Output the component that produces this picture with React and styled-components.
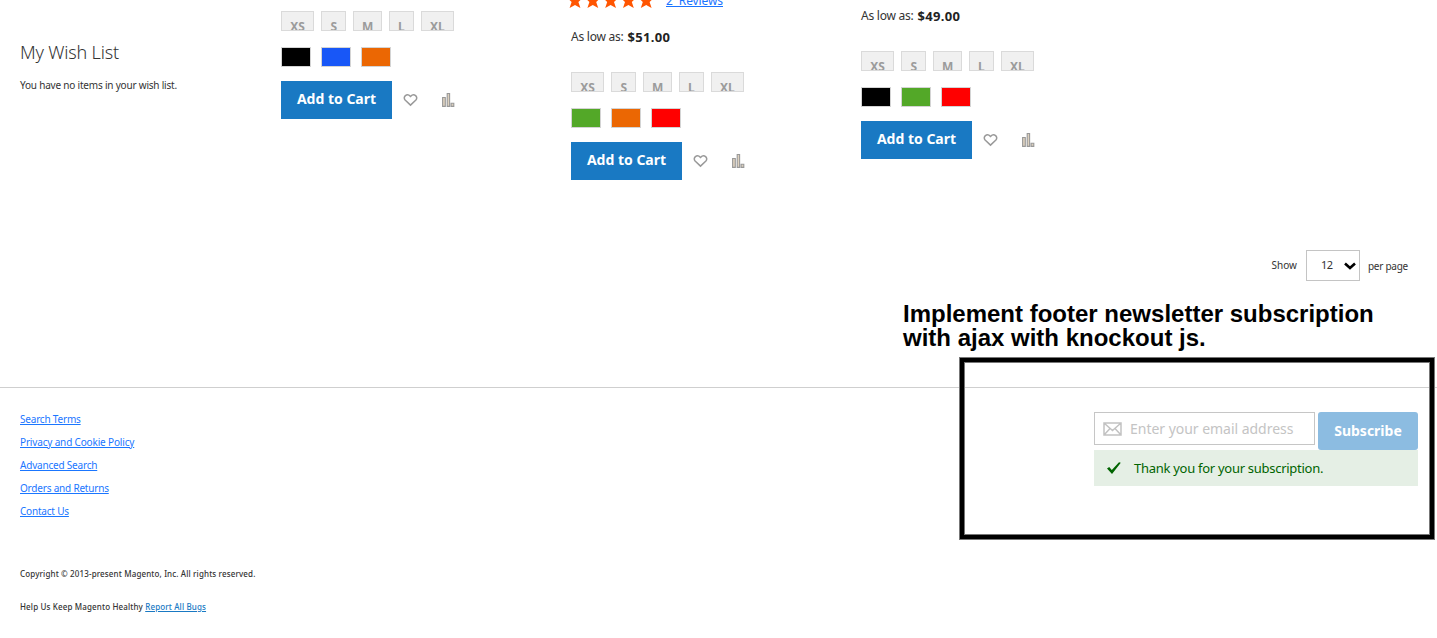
import React from "react";
import styled, { createGlobalStyle } from "styled-components";

const Global = createGlobalStyle`
  * { box-sizing: border-box; }
  body { margin: 0; background: #fff; overflow: hidden; }
`;

const Page = styled.div`
  position: relative;
  width: 1437px;
  height: 638px;
  overflow: hidden;
  color: #333;
  font-family: "Noto Sans", "Open Sans", sans-serif;
`;

const Main = styled.main`
  display: flex;
  height: 250px;
  padding-left: 20px;
`;

const Sidebar = styled.aside`
  width: 261px;
  padding-top: 40px;
`;

const Label = styled.span`
  display: inline-block;
  white-space: pre;
  font-size: ${(p) => p.$size}px;
  line-height: 16px;
  letter-spacing: ${(p) => p.$track || 0}px;
  padding-bottom: ${(p) => p.$lift || 0}px;
`;

const SideTitle = styled.h2`
  margin: 0 0 13px;
  font-weight: 300;
  font-size: 18px;
  line-height: 25px;
  letter-spacing: -0.18px;
`;

const SideText = styled.p`
  margin: 0;
  font-size: 10px;
  line-height: 14px;
  letter-spacing: -0.2px;
`;

const Card = styled.article`
  width: 290px;
  padding-top: ${(p) => p.$top}px;
`;

const Rating = styled.div`
  display: flex;
  height: 18px;
  margin: -9px 0 19px -4px;
`;

const Stars = styled.svg`
  width: 90px;
  height: 18px;
  margin-right: 9px;
  fill: #ff5501;
`;

const Reviews = styled.a`
  color: #1a73ff;
  font-size: 12px;
  line-height: 19px;
  letter-spacing: -0.1px;
  text-decoration: underline;
  white-space: pre;
`;

const Price = styled.div`
  display: flex;
  align-items: center;
  gap: 4px;
  height: 18px;
  margin-bottom: 26px;
  b { color: #222; font-size: 13px; font-weight: 700; letter-spacing: 0.35px; }
`;

const Row = styled.div`
  display: flex;
  gap: ${(p) => p.$gap}px;
  margin-bottom: ${(p) => p.$after || 0}px;
`;

const Size = styled.div`
  width: ${(p) => p.$w}px;
  height: 20px;
  overflow: hidden;
  border: 1px solid #dadada;
  background: #f0f0f0;
  color: #9b9b9b;
  padding-top: 7px;
  text-align: center;
  font-size: 12px;
  font-weight: 700;
  line-height: 16px;
`;

const Color = styled.div`
  width: 30px;
  height: 20px;
  border: 1px solid #d4d4d4;
  background: ${(p) => p.$c};
`;

const Actions = styled.div`
  display: flex;
  align-items: center;
`;

const CartButton = styled.button`
  width: 111px;
  height: 38px;
  padding: 0 0 2px;
  border: 1px solid #1979c3;
  background: #1979c3;
  color: #fff;
  font: 700 14px/18px "Noto Sans", sans-serif;
  white-space: nowrap;
`;

const Heart = styled.svg`
  width: 15px;
  height: 14px;
  margin-left: 11px;
`;

const Bars = styled.svg`
  width: 14px;
  height: 16px;
  margin-left: 24px;
`;

const Pager = styled.div`
  display: flex;
  align-items: center;
  justify-content: flex-end;
  height: 31px;
  padding-right: 29px;
`;

const Select = styled.div`
  display: flex;
  align-items: center;
  justify-content: space-between;
  width: 54px;
  height: 31px;
  margin: 0 8px 0 9px;
  padding: 0 3px 0 14px;
  border: 1px solid #c4c4c4;
`;

const Footer = styled.footer`
  display: flex;
  justify-content: space-between;
  height: 168px;
  margin-top: 106px;
  padding: 24px 19px 0 20px;
  border-top: 1px solid #cfcfcf;
`;

const Links = styled.nav`
  display: flex;
  flex-direction: column;
  align-items: flex-start;
`;

const FooterLink = styled.a`
  height: 23px;
  color: #1a76ff;
  font-size: 10px;
  line-height: 14px;
  letter-spacing: ${(p) => p.$track || -0.2}px;
  text-decoration: underline;
`;

const Newsletter = styled.section`
  width: 324px;
`;

const Field = styled.div`
  display: flex;
  align-items: center;
  width: 221px;
  height: 33px;
  padding-left: 8px;
  gap: 8px;
  border: 1px solid #c6c6c6;
  color: #c4c4c4;
`;

const Subscribe = styled.button`
  width: 100px;
  height: 38px;
  padding: 0;
  border: 0;
  border-radius: 3px;
  background: #8cbce1;
  color: #fff;
  font: 700 14px/18px "Noto Sans", sans-serif;
`;

const Success = styled.div`
  display: flex;
  align-items: center;
  height: 36px;
  padding-left: 13px;
  gap: 13px;
  background: #e5efe5;
  color: #006400;
`;

const Legal = styled.div`
  padding: 13px 20px 0;
  font-size: 8px;
  font-weight: 500;
  line-height: 12px;
  letter-spacing: ${(p) => p.$track}px;
  p { margin: 0 0 21px; }
  a { color: #1979c3; text-decoration: underline; }
`;

const Note = styled.div`
  position: absolute;
  left: 903px;
  top: 302px;
  color: #000;
  font: 700 24px/24px "Liberation Sans", Arial, sans-serif;
  white-space: nowrap;
`;

const Highlight = styled.div`
  position: absolute;
  left: 959px;
  top: 357px;
  width: 476px;
  height: 183px;
  border: 1px solid #777;
  box-shadow: inset 0 0 0 4px #000, inset 0 0 0 5px #777;
`;

const sizes = [["XS", 33.3], ["S", 25.5], ["M", 29], ["L", 25], ["XL", 33.5]];
const products = [
  { top: 11, colors: ["#000", "#1857f7", "#eb6703"] },
  { top: 0, stars: true, price: "$51.00", colors: ["#53a828", "#eb6703", "#ff0000"] },
  { top: 7, price: "$49.00", colors: ["#000", "#53a828", "#ff0000"] },
];

function Product({ item }) {
  return (
    <Card $top={item.top}>
      {item.stars && (
        <Rating>
          <Stars viewBox="0 0 90 18">
            {[0, 1, 2, 3, 4].map((i) => (
              <path key={i} transform={`translate(${i * 17.8} 0)`} d="M8 1l2.200 5.800h5.600l-4.400 4.200 2 6L8 13.900 2.600 17l2-6L.2 6.800h5.600z" />
            ))}
          </Stars>
          <Reviews>{"2  Reviews"}</Reviews>
        </Rating>
      )}
      {item.price && (
        <Price>
          <Label $size={12} $track={-0.25}>As low as:</Label>
          <b>{item.price}</b>
        </Price>
      )}
      <Row $gap={6.7} $after={16}>
        {sizes.map(([s, w]) => <Size key={s} $w={w}>{s}</Size>)}
      </Row>
      <Row $gap={10} $after={14}>
        {item.colors.map((c) => <Color key={c} $c={c} />)}
      </Row>
      <Actions>
        <CartButton>Add to Cart</CartButton>
        <Heart viewBox="0 0 15 14" fill="none" stroke="#999" strokeWidth="1.5">
          <path d="M7.500 12.100 2.100 7C-.6 3.900 3.900-.5 7.500 3.500 11.100-.5 15.600 3.900 12.900 7z" />
        </Heart>
        <Bars viewBox="0 0 14 16" fill="#ddd0bd" stroke="#999" strokeWidth="1.100">
          <path d="M.6 5.500h2.700v8.900H.6zM5.200 1.500h2.400v12.900H5.200zM9.100 11.200h2.700v3.200H9.100z" />
        </Bars>
      </Actions>
    </Card>
  );
}

export default function App() {
  return (
    <Page>
      <Global />
      <Main>
        <Sidebar>
          <SideTitle>My Wish List</SideTitle>
          <SideText>You have no items in your wish list.</SideText>
        </Sidebar>
        {products.map((p, i) => <Product key={i} item={p} />)}
      </Main>
      <Pager>
        <Label $size={10} $lift={1}>Show</Label>
        <Select>
          <Label $size={11} $track={-0.4} $lift={1}>12</Label>
          <svg width="12" height="8" viewBox="0 0 12 8" fill="none" stroke="#000" strokeWidth="2.600">
            <path d="M1 1.500 6 6l5-4.500" />
          </svg>
        </Select>
        <Label $size={10} $track={-0.25}>per page</Label>
      </Pager>
      <Footer>
        <Links>
          <FooterLink>Search Terms</FooterLink>
          <FooterLink $track={-0.16}>Privacy and Cookie Policy</FooterLink>
          <FooterLink>Advanced Search</FooterLink>
          <FooterLink>Orders and Returns</FooterLink>
          <FooterLink>Contact Us</FooterLink>
        </Links>
        <Newsletter>
          <Row $gap={3}>
            <Field>
              <svg width="19" height="14" viewBox="0 0 19 14" fill="none" stroke="#c2c2c2" strokeWidth="1.500">
                <path d="M1 1h17v12H1zM1 1l8.500 7.500L18 1M1 13l6-6.500M18 13l-6-6.500" />
              </svg>
              <Label $size={14} $track={-0.03}>Enter your email address</Label>
            </Field>
            <Subscribe>Subscribe</Subscribe>
          </Row>
          <Success>
            <svg width="14" height="12" viewBox="0 0 14 12" fill="#006400">
              <path d="M0 6.500 2.200 5l2.600 3L12 .3l1.800.4L5 12z" />
            </svg>
            <Label $size={13} $track={-0.28} $lift={1}>Thank you for your subscription.</Label>
          </Success>
        </Newsletter>
      </Footer>
      <Legal $track={0.14}>
        <p>Copyright © 2013-present Magento, Inc. All rights reserved.</p>
        <p>Help Us Keep Magento Healthy <a>Report All Bugs</a></p>
      </Legal>
      <Note>Implement footer newsletter subscription<br />with ajax with knockout js.</Note>
      <Highlight />
    </Page>
  );
}
